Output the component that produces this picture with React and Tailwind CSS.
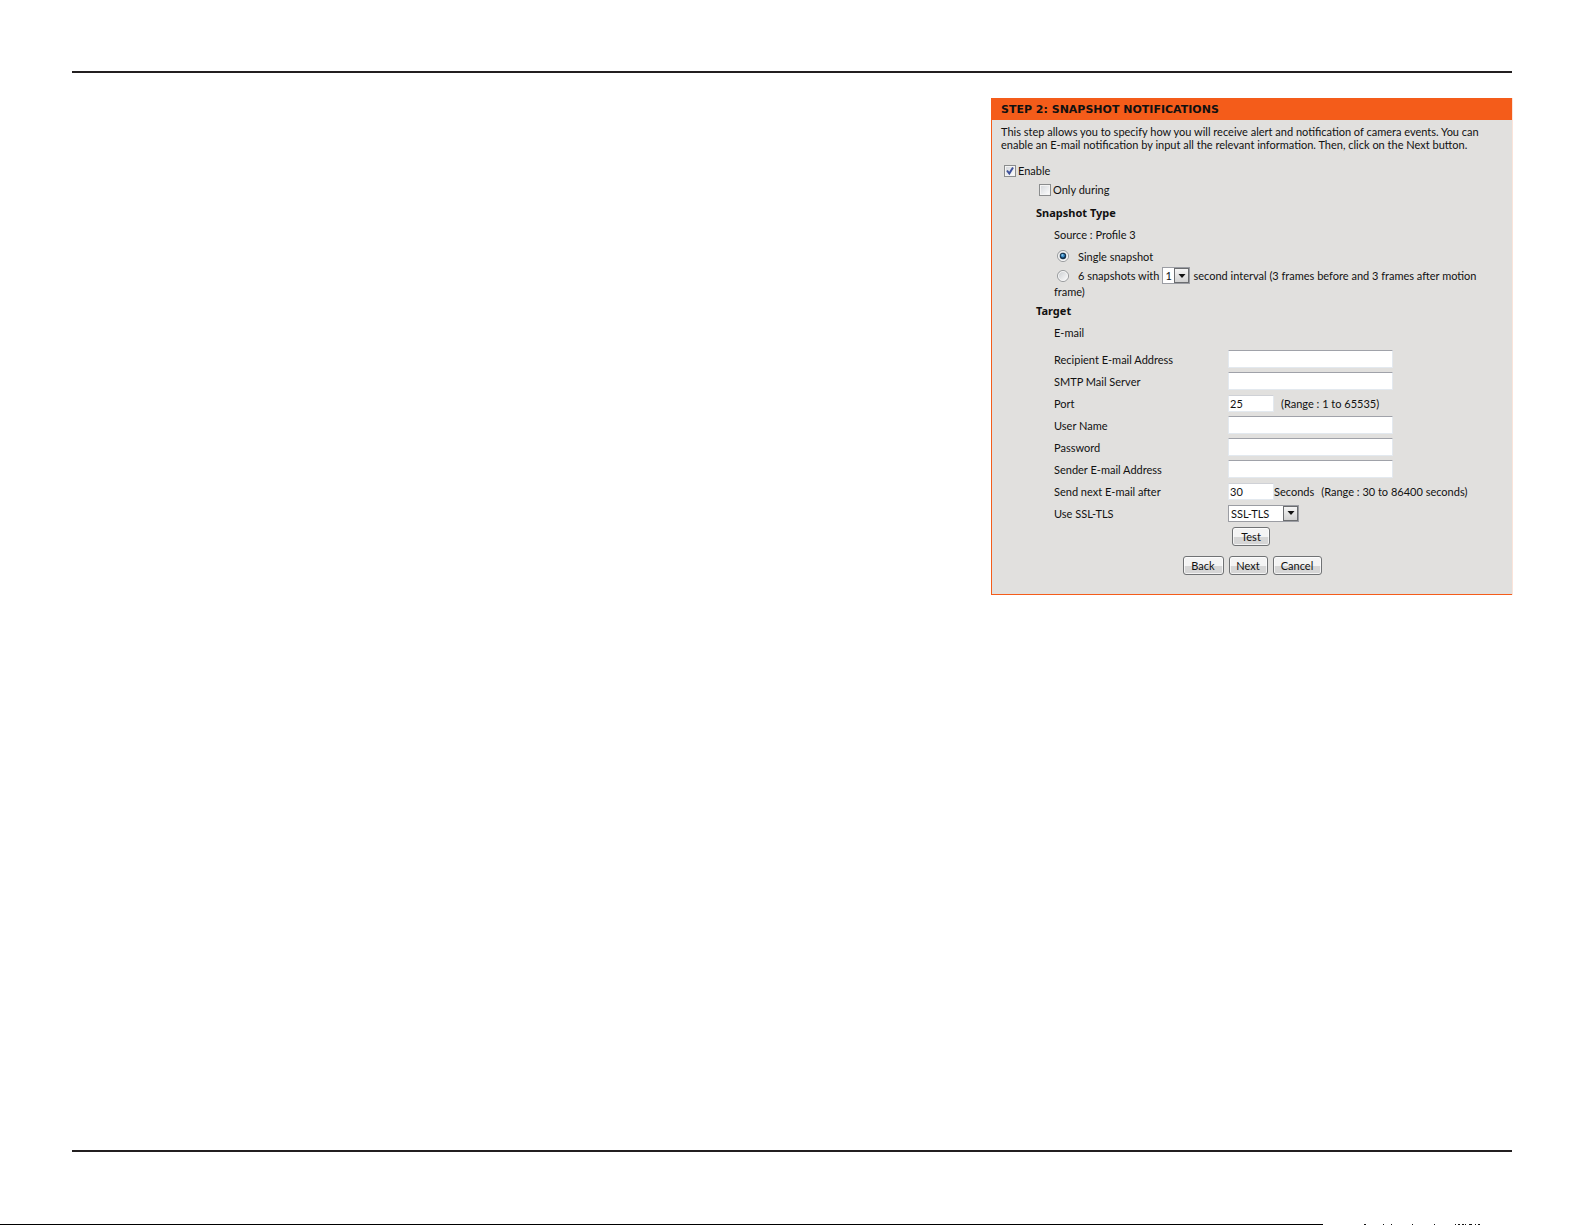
import React from "react";

const fields = [
  { id: "recipient", label: "Recipient E-mail Address", type: "text" },
  { id: "smtp", label: "SMTP Mail Server", type: "text" },
  { id: "port", label: "Port", type: "text", value: "25", hint: "(Range : 1 to 65535)" },
  { id: "user", label: "User Name", type: "text" },
  { id: "password", label: "Password", type: "password" },
  { id: "sender", label: "Sender E-mail Address", type: "text" },
  {
    id: "interval",
    label: "Send next E-mail after",
    type: "text",
    value: "30",
    unit: "Seconds",
    hint: "(Range : 30 to 86400 seconds)",
  },
];

const Checkbox = ({ id, defaultChecked }) => (
  <span className="relative inline-flex size-3 shrink-0">
    <input
      id={id}
      type="checkbox"
      defaultChecked={defaultChecked}
      className="peer size-3 appearance-none border border-[#8a8c8d] bg-linear-to-br from-[#d3d6da] to-white outline-1 -outline-offset-2 outline-[#f4f4f4]"
    />
    <svg
      viewBox="0 0 12 12"
      className="pointer-events-none absolute inset-0 hidden size-3 peer-checked:block"
      fill="none"
      stroke="#3f529b"
      strokeWidth="2"
    >
      <path d="M3 5.5 5.3 8.5 9 2.5" />
    </svg>
  </span>
);

const Radio = ({ id, defaultChecked }) => (
  <span className="relative inline-flex size-3 shrink-0">
    <input
      id={id}
      type="radio"
      name="snapshot"
      defaultChecked={defaultChecked}
      className="peer size-3 appearance-none rounded-full border border-[#96999b] bg-linear-to-br from-[#c9cccf] to-white outline-1 -outline-offset-2 outline-[#f4f4f4]"
    />
    <svg
      viewBox="0 0 12 12"
      className="pointer-events-none absolute inset-0 hidden size-3 peer-checked:block"
    >
      <circle cx="6" cy="6" r="3.2" fill="#16344f" />
      <circle cx="5.8" cy="5.6" r="1.9" fill="#3f93cf" />
      <circle cx="5.3" cy="5" r="0.7" fill="#b5e0f5" />
    </svg>
  </span>
);

const Select = ({ id, label, className, children }) => (
  <span className={`relative inline-flex h-[17px] ${className}`}>
    <select
      id={id}
      aria-label={label}
      className="h-full w-full appearance-none border border-[#9b9da3] bg-white pl-[2px] leading-none"
    >
      {children}
    </select>
    <span className="pointer-events-none absolute inset-y-px right-px flex w-[15px] items-center justify-center border border-[#6b6d70] bg-linear-to-b from-[#f5f5f5] to-[#d2d2d2]">
      <svg viewBox="0 0 8 4" className="h-1 w-2" fill="#111">
        <path d="M0.5 0h7L4 4z" />
      </svg>
    </span>
  </span>
);

const Button = ({ children, className }) => (
  <button
    type="button"
    className={`h-[19px] rounded-[3px] border border-[#707274] bg-linear-to-b from-[#f4f4f4] from-50% to-[#d6d6d6] to-50% leading-none ring-1 ring-white/70 ring-inset ${className}`}
  >
    {children}
  </button>
);

const Field = ({ id, label, type, value, unit, hint }) => (
  <div className="flex h-[22px] items-center">
    <label htmlFor={id} className="w-[174px]">
      {label}
    </label>
    <input
      id={id}
      type={type}
      defaultValue={value}
      className={`rounded-[1px] border bg-white ${
        value
          ? "h-[17px] w-[46px] border-[#e3e9ef] border-t-[#cfd1d6] pl-px"
          : "h-[18px] w-[165px] border-[#e3e9ef] border-t-[#a0a2a9]"
      }`}
    />
    {unit ? <span>{unit}</span> : null}
    {hint ? <span className="ml-[7px]">{hint}</span> : null}
  </div>
);

const SnapshotPanel = () => (
  <form className="ml-auto w-[521px] max-w-full border-b border-l border-[#f45c1a] bg-[#e1e0de] pb-[19px] font-['Lato',sans-serif] text-[11px] leading-[13px] text-[#111] shadow-[1px_0_0_#fbe4da]">
    <h1 className="flex h-[22px] items-center bg-[#f45c1a] pl-[9px] font-['DejaVu_Sans',sans-serif] font-bold">
      STEP 2: SNAPSHOT NOTIFICATIONS
    </h1>

    <p className="mt-[5px] pr-6 pl-[9px]">
      This step allows you to specify how you will receive alert and notification of camera events. You can
      enable an E-mail notification by input all the relevant information. Then, click on the Next button.
    </p>

    <div className="mt-[10px] flex h-[19px] items-center gap-[2px] pl-3">
      <Checkbox id="enable" defaultChecked />
      <label htmlFor="enable">Enable</label>
    </div>
    <div className="flex h-[19px] items-center gap-[2px] pl-[47px]">
      <Checkbox id="during" />
      <label htmlFor="during">Only during</label>
    </div>

    <h2 className="mt-[2px] flex h-[22px] items-center pl-11 font-['Noto_Sans',sans-serif] font-bold">
      Snapshot Type
    </h2>
    <div className="pr-5 pl-[62px]">
      <p className="flex h-[22px] items-center">Source : Profile 3</p>
      <div className="flex h-[22px] items-center gap-[9px] pl-[3px]">
        <Radio id="single" defaultChecked />
        <label htmlFor="single">Single snapshot</label>
      </div>
      <div className="flex flex-wrap items-center gap-x-[3px] leading-[15px]">
        <div className="flex items-center gap-[9px] pl-[3px]">
          <Radio id="six" />
          <label htmlFor="six">6 snapshots with</label>
        </div>
        <Select id="seconds" label="Seconds between snapshots" className="w-7">
          <option>1</option>
          <option>2</option>
          <option>3</option>
        </Select>
        <span>second interval (3 frames before and 3 frames after motion</span>
        <span>frame)</span>
      </div>
    </div>

    <h2 className="flex h-[22px] items-center pl-11 font-['Noto_Sans',sans-serif] font-bold">Target</h2>
    <div className="pl-[62px]">
      <p className="flex h-[22px] items-center">E-mail</p>
      <div className="mt-[5px]">
        {fields.map((field) => (
          <Field key={field.id} {...field} />
        ))}
        <div className="flex h-[22px] items-center">
          <label htmlFor="ssl" className="w-[174px]">
            Use SSL-TLS
          </label>
          <Select id="ssl" className="w-[71px]">
            <option>SSL-TLS</option>
            <option>STARTTLS</option>
          </Select>
        </div>
      </div>
      <div className="flex h-6 items-center pl-[178px]">
        <Button className="w-[38px]">Test</Button>
      </div>
    </div>

    <div className="mt-2 flex justify-center gap-[5px]">
      <Button className="w-[41px]">Back</Button>
      <Button className="w-[39px]">Next</Button>
      <Button className="w-[49px]">Cancel</Button>
    </div>
  </form>
);

export default function App() {
  return (
    <div className="flex min-h-screen flex-col bg-white">
      <main className="mt-[71px] mr-[73px] mb-[72px] ml-[72px] flex-1 border-y-2 border-[#231f20] pt-[25px]">
        <SnapshotPanel />
      </main>
      <footer className="flex h-px">
        <div className="flex-1 bg-black" />
        <svg viewBox="0 0 262 1" className="h-px w-[262px]" shapeRendering="crispEdges">
          <path
            d="M41 0h2v1h-2zM60 0h1v1h-1zM68 0h1v1h-1zM89 0h1v1h-1zM111 0h1v1h-1zM132 0h1v1h-1zM135 0h2v1h-2zM139 0h2v1h-2zM142 0h1v1h-1zM146 0h3v1h-3zM152 0h1v1h-1zM155 0h2v1h-2z"
            fill="#111"
          />
        </svg>
      </footer>
    </div>
  );
}
